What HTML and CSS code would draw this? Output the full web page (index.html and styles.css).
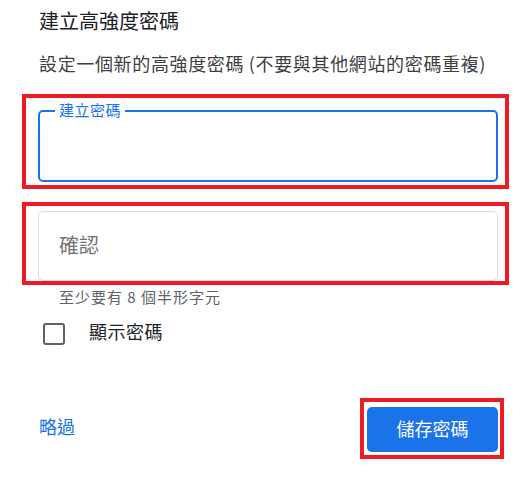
FILE: index.html
```html
<!DOCTYPE html>
<html lang="zh-Hant">
<head>
<meta charset="utf-8">
<title>建立高強度密碼</title>
<link rel="stylesheet" href="styles.css">
</head>
<body>
<div class="dialog">
  <div class="title">建立高強度密碼</div>
  <div class="subtitle">設定一個新的高強度密碼 (不要與其他網站的密碼重複)</div>
  <div class="mark mark-create">
    <div class="field field-focused">
      <span class="field-label">建立密碼</span>
    </div>
  </div>
  <div class="mark mark-confirm">
    <div class="field field-plain">
      <span class="placeholder">確認</span>
    </div>
  </div>
  <div class="helper">至少要有 8 個半形字元</div>
  <div class="check-row">
    <span class="checkbox"></span>
    <span class="check-label">顯示密碼</span>
  </div>
  <div class="actions">
    <span class="skip">略過</span>
    <div class="mark mark-save">
      <div class="save-btn">儲存密碼</div>
    </div>
  </div>
</div>
</body>
</html>
```

FILE: styles.css
```css
* { box-sizing: border-box; }
html, body { margin: 0; padding: 0; background: #ffffff; }
body {
  font-family: "Noto Sans CJK TC", "Noto Sans", sans-serif;
  width: 524px;
  height: 477px;
  overflow: hidden;
}
.dialog { padding-top: 9px; }
.title {
  margin-left: 39px;
  font-size: 20px;
  line-height: 24px;
  color: #202124;
}
.subtitle {
  margin-top: 18px;
  margin-left: 39px;
  font-size: 18px;
  line-height: 24px;
  letter-spacing: 0.65px;
  color: #3c4043;
  white-space: nowrap;
}
.mark {
  border: 4px solid #ed1c24;
}
.mark-create {
  margin-top: 19px;
  margin-left: 22px;
  width: 487px;
  height: 95px;
  padding: 12px 7px 3px 12px;
}
.mark-confirm {
  margin-top: 13px;
  margin-left: 22px;
  width: 487px;
  height: 83px;
  padding: 5px 7px 0 12px;
}
.field {
  position: relative;
  width: 460px;
  border-radius: 5px;
  display: flex;
  align-items: center;
}
.field-focused {
  height: 72px;
  border: 2px solid #1a73e8;
}
.field-label {
  position: absolute;
  top: -10px;
  left: 15px;
  padding: 0 4px;
  background: #ffffff;
  font-size: 15px;
  line-height: 15px;
  letter-spacing: 0.5px;
  color: #1a73e8;
}
.field-plain {
  height: 70px;
  border: 1px solid #dadce0;
  padding-left: 20px;
}
.placeholder {
  font-size: 20px;
  line-height: 24px;
  color: #6f7377;
  margin-top: -2px;
}
.helper {
  margin-top: 2px;
  margin-left: 59px;
  font-size: 15px;
  line-height: 20px;
  letter-spacing: 1px;
  color: #5f6368;
}
.check-row {
  display: flex;
  align-items: flex-start;
  margin-top: 16px;
  margin-left: 43px;
}
.checkbox {
  width: 22px;
  height: 22px;
  border: 2px solid #5f6368;
  border-radius: 3px;
  flex: none;
}
.check-label {
  margin-left: 24px;
  margin-top: -1px;
  font-size: 18px;
  line-height: 18px;
  letter-spacing: 0.5px;
  color: #202124;
}
.actions {
  display: flex;
  justify-content: space-between;
  align-items: flex-start;
  margin-top: 53px;
  margin-left: 39px;
  margin-right: 20px;
}
.skip {
  margin-top: 19px;
  font-size: 18px;
  line-height: 18px;
  color: #1a73e8;
}
.mark-save {
  width: 144px;
  height: 61px;
  padding: 5px 2px 3px 3px;
}
.save-btn {
  width: 131px;
  height: 45px;
  border-radius: 5px;
  background: #1a73e8;
  color: #ffffff;
  font-size: 18px;
  line-height: 18px;
  display: flex;
  align-items: center;
  justify-content: center;
  padding-bottom: 3px;
}
```
